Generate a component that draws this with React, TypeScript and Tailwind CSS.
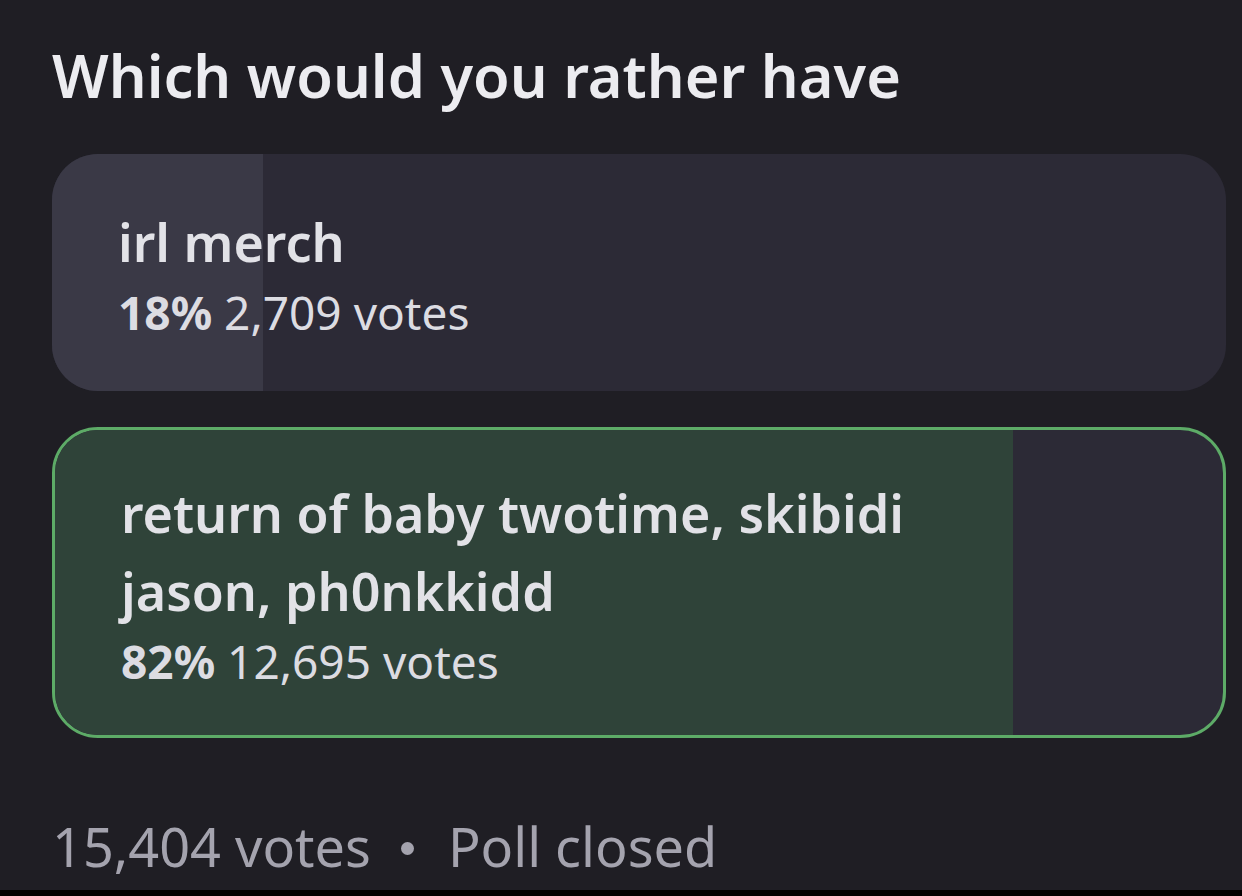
import React from 'react';

type Option = { label: string, percent: number, votes: string, winner?: boolean };

const options: Option[] = [
  { label: 'irl merch', percent: 18, votes: '2,709' },
  { label: 'return of baby twotime, skibidi jason, ph0nkkidd', percent: 82, votes: '12,695', winner: true },
];

const PollOption = ({ option }: { option: Option }) => {
  const fill = option.winner ? 'bg-[#2f4339]' : 'bg-[#3a3946]';
  const frame = option.winner
    ? 'h-[311px] border-[3px] border-[#5dab67]'
    : 'h-[237px]';
  return (
    <div className={`relative overflow-hidden rounded-[46px] bg-[#2c2a36] ${frame}`}>
      <div className={`absolute inset-y-0 left-0 ${fill}`} style={{ width: `${option.percent}%` }} />
      <div className="relative flex h-full flex-col justify-center pl-[66px] pr-[260px]">
        <div className="text-[52px] font-semibold leading-[78px] text-[#e2e2e7]">{option.label}</div>
        <div className="text-[46px] leading-[62px] text-[#dcdce2]">
          <span className="font-bold">{option.percent}%</span> {option.votes} votes
        </div>
      </div>
    </div>
  );
};

export default function App() {
  return (
    <div className="flex h-[896px] w-[1242px] flex-col bg-[#1f1e24] font-['Noto_Sans',sans-serif]">
      <div className="flex flex-1 flex-col pl-[52px] pr-[16px]">
        <h1 className="mt-[35px] text-[59.5px] font-semibold leading-[80px] text-[#ececf0]">Which would you rather have</h1>
        <div className="mt-[39px] flex flex-col gap-[36px]">
          {options.map((o) => <PollOption key={o.label} option={o} />)}
        </div>
        <div className="mt-[76px] flex items-center text-[54px] leading-[64px] text-[#a4a3ae]">
          <span>15,404 votes</span>
          <span className="ml-[30px] mr-[34px] mt-[4px] h-[13px] w-[13px] shrink-0 rounded-full bg-[#a4a3ae]" />
          <span>Poll closed</span>
        </div>
      </div>
      <div className="h-[6px] bg-black" />
    </div>
  );
}
